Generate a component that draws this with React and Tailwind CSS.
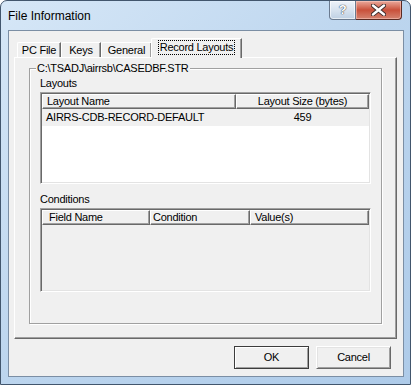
import React from "react";

const font = "font-['Liberation_Sans',Arial,sans-serif]";

const HeaderCell = ({ children, className = "" }) => (
  <div
    className={`h-[15px] flex items-center border-t border-l border-t-white border-l-white border-r border-b border-r-[#696969] border-b-[#696969] shadow-[inset_-1px_-1px_0_#a0a0a0] ${className}`}
  >
    {children}
  </div>
);

const ListView = ({ columns, rows, disabled, height }) => (
  <div
    className={`border border-t-[#a0a0a0] border-l-[#a0a0a0] border-r-white border-b-white p-[1px] shadow-[inset_1px_1px_0_#696969,inset_-1px_-1px_0_#e3e3e3] ${
      disabled ? "bg-[#f0f0f0]" : "bg-white"
    } ${height}`}
  >
    <div className="flex bg-[#f0f0f0]">
      {columns.map((c) => (
        <HeaderCell key={c.label} className={`${c.width} ${c.align}`}>
          {c.label}
        </HeaderCell>
      ))}
    </div>
    {rows.map((r, i) => (
      <div key={i} className="flex h-[17px] items-center bg-[#f0f0f0]">
        {r.map((cell, j) => (
          <div key={j} className={`${columns[j].width} ${columns[j].align}`}>
            {cell}
          </div>
        ))}
      </div>
    ))}
  </div>
);

const Tab = ({ label, width }) => (
  <div
    className={`h-[15px] ${width} flex items-center justify-center rounded-tl-[2px] border-l border-t border-white border-r border-r-[#696969] shadow-[inset_-1px_0_0_#a0a0a0]`}
  >
    {label}
  </div>
);

export default function App() {
  return (
    <div className={`${font} text-[11px] tracking-[-0.25px] text-black w-[411px] h-[385px] bg-white`}>
      <div className="w-[411px] h-[385px] flex flex-col rounded-t-[7px] border border-[#42566d] bg-linear-to-br from-[#d6e7f7] via-[#bcd5ee] to-[#aecbe9]">
        {/* title bar */}
        <div className="h-[29px] flex items-start shrink-0">
          <div className="pl-[7px] pt-[6px] text-[12px] tracking-normal flex-1">File Information</div>
          <div className="flex mr-[8px]">
            <div className="w-[27px] h-[19px] border border-[#6a7a8f] border-t-0 rounded-bl-[4px] bg-linear-to-b from-[#eef3f9] via-[#d8e3ef] to-[#bfd0e3] flex items-center justify-center shadow-[inset_0_0_0_1px_rgba(255,255,255,0.6)]">
              <span className="font-bold text-[13px] text-white [text-shadow:0_0_1px_#2f3a48,0_0_1px_#2f3a48]">?</span>
            </div>
            <div className="w-[46px] h-[19px] border border-[#5a2a22] border-l-0 border-t-0 rounded-br-[4px] bg-linear-to-b from-[#e9a99c] via-[#c9503a] to-[#d4826f] flex items-center justify-center shadow-[inset_0_0_0_1px_rgba(255,210,200,0.5)]">
              <svg width="15" height="12" viewBox="0 0 15 12">
                <path d="M2 1.5 L13 10.5 M13 1.5 L2 10.5" stroke="#3b2a2a" strokeWidth="4.2" strokeLinecap="round" />
                <path d="M2 1.5 L13 10.5 M13 1.5 L2 10.5" stroke="#ffffff" strokeWidth="2.4" strokeLinecap="round" />
              </svg>
            </div>
          </div>
        </div>

        {/* client area */}
        <div className="flex-1 ml-[7px] mr-[6px] mb-[7px] border border-[#7b8ea4] bg-[#f0f0f0] flex flex-col">
          <div className="pl-[5px] pr-[6px] pt-[7px]">
            {/* tab strip */}
            <div className="flex items-end h-[19px] pl-[3px]">
              <Tab label="PC File" width="w-[44px]" />
              <Tab label="Keys" width="w-[40px]" />
              <Tab label="General" width="w-[51px]" />
              <div className="relative z-10 -ml-[1px] -mb-[1px] h-[20px] w-[91px] bg-[#f0f0f0] rounded-tl-[2px] border-l border-t border-white border-r border-r-[#696969] shadow-[inset_-1px_0_0_#a0a0a0] flex items-center justify-center pb-[2px]">
                <span className="border border-dotted border-black px-[1px] leading-[13px]">
                  Record Layouts
                </span>
              </div>
            </div>

            {/* tab panel */}
            <div className="h-[282px] border-l border-t border-white border-r border-b border-r-[#696969] border-b-[#696969] shadow-[inset_-1px_-1px_0_#a0a0a0] pt-[10px] px-[14px]">
              <div className="relative h-[256px] border border-[#a0a0a0] shadow-[inset_1px_1px_0_#fff,1px_1px_0_#fff] px-[10px] pt-[6px]">
                <div className="absolute -top-[7px] left-[6px] bg-[#f0f0f0] px-[1px] leading-[13px]">
                  C:\TSADJ\airrsb\CASEDBF.STR
                </div>
                <div className="h-[17px] flex items-center">Layouts</div>
                <ListView
                  height="h-[92px]"
                  columns={[
                    { label: "Layout Name", width: "w-[194px]", align: "pl-[4px]" },
                    { label: "Layout Size (bytes)", width: "w-[133px]", align: "justify-center text-center" },
                  ]}
                  rows={[["AIRRS-CDB-RECORD-DEFAULT", "459"]]}
                />
                <div className="h-[17px] mt-[7px] flex items-center">Conditions</div>
                <ListView
                  disabled
                  height="h-[84px]"
                  columns={[
                    { label: "Field Name", width: "w-[108px]", align: "pl-[6px]" },
                    { label: "Condition", width: "w-[100px]", align: "pl-[2px]" },
                    { label: "Value(s)", width: "w-[119px]", align: "pl-[4px]" },
                  ]}
                  rows={[]}
                />
              </div>
            </div>
          </div>

          {/* buttons */}
          <div className="flex justify-end gap-[7px] pr-[12px] pt-[7px]">
            <button className="w-[75px] h-[23px] border border-[#3c3c3c] bg-[#f0f0f0] shadow-[inset_1px_1px_0_#fff,inset_-1px_-1px_0_#a0a0a0]">
              OK
            </button>
            <button className="w-[75px] h-[23px] border border-t-white border-l-white border-r-[#696969] border-b-[#696969] bg-[#f0f0f0] shadow-[inset_1px_1px_0_#e3e3e3,inset_-1px_-1px_0_#a0a0a0]">
              Cancel
            </button>
          </div>
        </div>
      </div>
    </div>
  );
}
